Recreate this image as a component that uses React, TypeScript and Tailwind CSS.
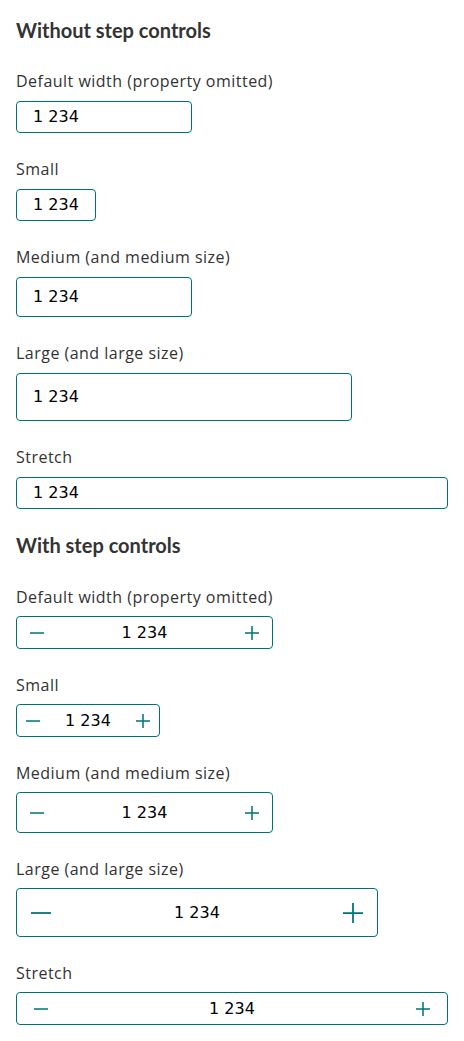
import React from "react";

type Size = "default" | "small" | "medium" | "large" | "stretch";

const headingFont = "font-['Lato','Noto_Sans',sans-serif]";
const labelFont = "font-['Open_Sans','Noto_Sans',sans-serif]";
const valueFont = "font-['DejaVu_Sans',sans-serif]";

const plainBox: Record<Size, string> = {
  default: "w-[176px] h-8",
  small: "w-20 h-8",
  medium: "w-[176px] h-10",
  large: "w-[336px] h-12",
  stretch: "w-full h-8",
};

const stepBox: Record<Size, string> = {
  default: "w-[257px] h-[33px]",
  small: "w-[144px] h-[33px]",
  medium: "w-[257px] h-[41px]",
  large: "w-[362px] h-[49px]",
  stretch: "w-full h-[33px]",
};

const stepButton: Record<Size, string> = {
  default: "w-10",
  small: "w-8",
  medium: "w-10",
  large: "w-12",
  stretch: "w-12",
};

const fields: { label: string; size: Size }[] = [
  { label: "Default width (property omitted)", size: "default" },
  { label: "Small", size: "small" },
  { label: "Medium (and medium size)", size: "medium" },
  { label: "Large (and large size)", size: "large" },
  { label: "Stretch", size: "stretch" },
];

function MinusIcon({ big }: { big?: boolean }) {
  const s = big ? 20 : 14;
  return (
    <svg width={s} height={s} viewBox={`0 0 ${s} ${s}`} fill="none">
      <path d={`M0 ${s / 2}H${s}`} stroke="#007272" strokeWidth={big ? 1.75 : 1.5} />
    </svg>
  );
}

function PlusIcon({ big }: { big?: boolean }) {
  const s = big ? 20 : 14;
  return (
    <svg width={s} height={s} viewBox={`0 0 ${s} ${s}`} fill="none">
      <path
        d={`M0 ${s / 2}H${s}M${s / 2} 0V${s}`}
        stroke="#007272"
        strokeWidth={big ? 1.75 : 1.5}
      />
    </svg>
  );
}

function Label({ children, step }: { children: React.ReactNode; step?: boolean }) {
  return (
    <label
      className={`block ${labelFont} text-base leading-6 tracking-[0.03em] text-[#333333] ${step ? "mb-[7px]" : "mb-2"}`}
    >
      {children}
    </label>
  );
}

function PlainInput({ size }: { size: Size }) {
  return (
    <div
      className={`${plainBox[size]} flex items-center rounded border border-[#007272] bg-white pl-4 ${valueFont} text-base text-black`}
    >
      1 234
    </div>
  );
}

function StepInput({ size }: { size: Size }) {
  const big = size === "large";
  return (
    <div
      className={`${stepBox[size]} flex items-stretch rounded border border-[#007272] bg-white ${valueFont} text-base text-black`}
    >
      <button className={`${stepButton[size]} flex shrink-0 items-center justify-center`}>
        <MinusIcon big={big} />
      </button>
      <div className="flex flex-1 items-center justify-center">1 234</div>
      <button className={`${stepButton[size]} flex shrink-0 items-center justify-center`}>
        <PlusIcon big={big} />
      </button>
    </div>
  );
}

export default function App() {
  return (
    <div className="min-h-screen bg-white px-4 pt-4">
      {/* Without step controls */}
      <h3 className={`${headingFont} text-xl font-bold leading-7 text-[#333333]`}>
        Without step controls
      </h3>
      <div className="mt-[25px] flex flex-col gap-6">
        {fields.map((f) => (
          <div key={f.label}>
            <Label>{f.label}</Label>
            <PlainInput size={f.size} />
          </div>
        ))}
      </div>

      {/* With step controls */}
      <h3 className={`mt-[22px] ${headingFont} text-xl font-bold leading-7 text-[#333333]`}>
        With step controls
      </h3>
      <div className="mt-[26px] flex flex-col gap-6">
        {fields.map((f) => (
          <div key={f.label}>
            <Label step>{f.label}</Label>
            <StepInput size={f.size} />
          </div>
        ))}
      </div>
    </div>
  );
}
